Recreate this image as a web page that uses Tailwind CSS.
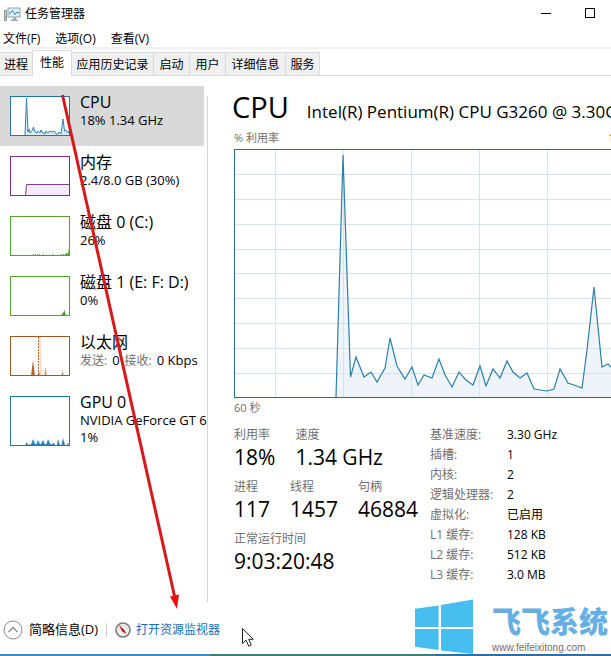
<!DOCTYPE html>
<html lang="zh-CN">
<head>
    <meta charset="UTF-8">
    <meta name="viewport" content="width=device-width, initial-scale=1.0">
    <title>任务管理器</title>
    <script src="https://cdn.jsdelivr.net/npm/@tailwindcss/browser@4"></script>
</head>

<body class="relative flex min-h-screen flex-col overflow-x-hidden bg-white font-['Open_Sans','Noto_Sans_CJK_SC',sans-serif] text-xs text-black">

<!-- Title bar -->
<header class="flex h-7 items-center justify-between pl-1">
    <div class="flex items-center gap-1">
        <svg class="h-4 w-[17px]" viewBox="0 0 17 16">
            <rect x="0.5" y="4.500" width="2" height="10" fill="#c9d2d0" stroke="#8b9a98"/>
            <path d="M1 11h1.500" stroke="#5a9a5a"/>
            <rect x="4" y="2" width="12" height="9" fill="#d9f1f8" stroke="#8fa3ab"/>
            <path d="M5 7h1.500l2-2.500 2.500 4 1.500-2h2.500" fill="none" stroke="#2f83b5"/>
            <path d="M9 11.500h3v2h2V15H7v-1.500h2z" fill="#9aa8ac"/>
        </svg>
        <h1 class="text-xs">任务管理器</h1>
    </div>
    <div class="flex">
        <button class="flex h-7 w-[45px] items-center justify-center" aria-label="最小化">
            <svg class="h-3 w-3" viewBox="0 0 12 12"><path d="M1 5.500h10" stroke="#000"/></svg>
        </button>
        <button class="flex h-7 w-[43px] items-center justify-center pb-[2px]" aria-label="最大化">
            <svg class="h-3 w-3" viewBox="0 0 12 12"><rect x="1.500" y="1.500" width="9" height="9" fill="none" stroke="#000"/></svg>
        </button>
    </div>
</header>

<!-- Menu -->
<nav class="flex h-[21px] items-center gap-[15px] border-b-2 border-[#f0f0f0] pt-[3px] pl-[3px]">
    <button>文件(F)</button>
    <button>选项(O)</button>
    <button>查看(V)</button>
</nav>

<!-- Tabs -->
<div class="flex h-[27px] items-end border-b border-[#d9d9d9] whitespace-nowrap" role="tablist">
    <button role="tab" class="h-[23px] w-8 border-t border-[#d9d9d9] bg-[#f0f0f0] pt-[2px] pl-1 text-left">进程</button>
    <button role="tab" aria-selected="true" class="-mb-px h-[26px] w-10 border border-b-0 border-[#d9d9d9] bg-white pb-[2px]">性能</button>
    <button role="tab" class="h-[23px] w-[82px] border-t border-r border-[#d9d9d9] bg-[#f0f0f0] pt-[2px]">应用历史记录</button>
    <button role="tab" class="h-[23px] w-9 border-t border-r border-[#d9d9d9] bg-[#f0f0f0] pt-[2px]">启动</button>
    <button role="tab" class="h-[23px] w-9 border-t border-r border-[#d9d9d9] bg-[#f0f0f0] pt-[2px]">用户</button>
    <button role="tab" class="h-[23px] w-[60px] border-t border-r border-[#d9d9d9] bg-[#f0f0f0] pt-[2px]">详细信息</button>
    <button role="tab" class="h-[23px] w-[34px] border-t border-r border-[#d9d9d9] bg-[#f0f0f0] pt-[2px]">服务</button>
</div>

<main class="flex flex-1">
    <!-- Resource list -->
    <aside class="w-[207px] shrink-0 pt-[10px] whitespace-nowrap">
        <button class="flex h-[60px] w-[204px] items-start gap-[10px] bg-[#d9d9d9] pt-[6px] pl-[10px] text-left">
            <svg class="mt-1 h-10 w-[60px] shrink-0 bg-white" viewBox="0 0 60 40">
                <path d="M15 39L16.500 2 18 36 19 33 20 37 22 35 23.500 31 25 36 27 37 28 35 30 37 31 34 33 37 35 38 36 35 38 37 40 35 42 36 44 35 46 38 48 38 49 36 51 38 53 23 54.500 35 56 34 58 37 60 34V40H15z" fill="#dcecf6" stroke="#2f83b5"/>
                <rect x="0.5" y="0.5" width="59" height="39" fill="none" stroke="#1f78a8"/>
            </svg>
            <span>
                <span class="block text-base leading-5">CPU</span>
                <span class="block text-[13px] leading-[17px]">18% 1.34 GHz</span>
            </span>
        </button>
        <button class="flex h-[60px] w-[204px] items-start gap-[10px] pt-[6px] pl-[10px] text-left">
            <svg class="mt-1 h-10 w-[60px] shrink-0 bg-white" viewBox="0 0 60 40">
                <path d="M15.500 40L16.500 28.500H60V40z" fill="#f3ebf5" stroke="#8b35a0"/>
                <rect x="0.5" y="0.5" width="59" height="39" fill="none" stroke="#7d2c92"/>
            </svg>
            <span>
                <span class="block text-base leading-5">内存</span>
                <span class="block text-[13px] leading-[17px]">2.4/8.0 GB (30%)</span>
            </span>
        </button>
        <button class="flex h-[60px] w-[204px] items-start gap-[10px] pt-[6px] pl-[10px] text-left">
            <svg class="mt-1 h-10 w-[60px] shrink-0 bg-white" viewBox="0 0 60 40">
                <path d="M23 38.500h7M33 38.500h2M42 38.500h2M51 38.500h4" stroke="#6fb04a" stroke-dasharray="1 1"/>
                <path d="M54 40L56 37 58 38 59 32V40z" fill="#4d9a22"/>
                <rect x="0.5" y="0.5" width="59" height="39" fill="none" stroke="#57a02c"/>
            </svg>
            <span>
                <span class="block text-base leading-5">磁盘 0 (C:)</span>
                <span class="block text-[13px] leading-[17px]">26%</span>
            </span>
        </button>
        <button class="flex h-[60px] w-[204px] items-start gap-[10px] pt-[6px] pl-[10px] text-left">
            <svg class="mt-1 h-10 w-[60px] shrink-0 bg-white" viewBox="0 0 60 40">
                <path d="M50 40L52 38 53 37 54.500 34 56 40z" fill="#4d9a22"/>
                <rect x="0.5" y="0.5" width="59" height="39" fill="none" stroke="#57a02c"/>
            </svg>
            <span>
                <span class="block text-base leading-5">磁盘 1 (E: F: D:)</span>
                <span class="block text-[13px] leading-[17px]">0%</span>
            </span>
        </button>
        <button class="flex h-[60px] w-[204px] items-start gap-[10px] pt-[6px] pl-[10px] text-left">
            <svg class="mt-1 h-10 w-[60px] shrink-0 bg-white" viewBox="0 0 60 40">
                <path d="M21 40L23 24 25 40z" fill="#b5622c"/>
                <path d="M27 40L29 35 31 40zM34 40L35.500 31 37 40zM51 40L52.500 34 54 40z" fill="#d59a78"/>
                <path d="M30 1L31 39" stroke="#f5ddd0" stroke-width="2"/>
                <path d="M28.500 1V39" stroke="#c0672f" stroke-dasharray="2 1"/>
                <rect x="0.5" y="0.5" width="59" height="39" fill="none" stroke="#a5561c"/>
            </svg>
            <span>
                <span class="block text-base leading-5">以太网</span>
                <span class="flex gap-[5px] text-[13px] leading-[17px]">
                    <span class="text-xs leading-[17px] text-[#707070]">发送:</span>
                    <span>0</span>
                    <span class="text-xs leading-[17px] text-[#707070]">接收:</span>
                    <span>0 Kbps</span>
                </span>
            </span>
        </button>
        <button class="flex h-[70px] w-[204px] items-start gap-[10px] pt-[6px] pl-[10px] text-left">
            <svg class="mt-1 h-[50px] w-[60px] shrink-0 bg-white" viewBox="0 0 60 50">
                <path d="M15 50L16.500 46 18 48.500 21 48.500 23 43 25 48 26.500 48 28 44 30 48 31 48 33 44 35 48.500 36.500 48 38 43 40 47.500 42 48.500 44 46.500 45 49 47 49 48 43 50 49 51.500 49 53 42 55 49 57 49 58 46 59 50z" fill="#2f83b5"/>
                <rect x="0.5" y="0.5" width="59" height="49" fill="none" stroke="#1f78a8"/>
            </svg>
            <span>
                <span class="block text-base leading-5">GPU 0</span>
                <span class="block text-[13px] leading-[17px]">NVIDIA GeForce GT 6</span>
                <span class="block text-[13px] leading-[17px]">1%</span>
            </span>
        </button>
    </aside>
    <div class="mt-5 w-px shrink-0 bg-[#d5d5d5]"></div>

    <!-- CPU details -->
    <section class="min-w-0 flex-1 overflow-hidden pt-[11px] pl-[26px]">
        <div class="-ml-[2px] flex h-[41px] items-baseline gap-[18px] whitespace-nowrap">
            <h2 class="text-[29px] leading-10">CPU</h2>
            <p class="text-[17px]">Intel(R) Pentium(R) CPU G3260 @ 3.30GHz</p>
        </div>
        <div class="w-[calc(100%+25px)]">
            <div class="flex h-[21px] items-center justify-between text-[11px] text-[#707070]">
                <span>% 利用率</span>
                <span class="text-[#c07a3a]">100%</span>
            </div>
            <svg class="block h-[249px] w-full">
                <path d="M102 248L109 6 116.500 228 122 208 130 228 137 223 143 233 151 219 156 189 163 217 171 230 178 218 184 236 190 226 198 229 205 210 211 226 218 238 225 223 232 231 239 236 246 217 252 237 259 220 266 229 273 212 279 223 286 229 293 224 300 240 313 242 320 240 326 220 334 234 340 236 348 239 353 201 360 138 368 218 374 215 380 221 402 224V248z" fill="#eef4fa"/>
                <path d="M41.500 0V248M109.500 0V248M177.500 0V248M245.500 0V248M313.500 0V248M381.500 0V248" stroke="#d3e4ec"/>
                <path d="M0 25.500H2000M0 50.500H2000M0 75.500H2000M0 100.500H2000M0 124.500H2000M0 149.500H2000M0 174.500H2000M0 199.500H2000M0 224.500H2000" stroke="#d3e4ec"/>
                <path d="M102 248L109 6 116.500 228 122 208 130 228 137 223 143 233 151 219 156 189 163 217 171 230 178 218 184 236 190 226 198 229 205 210 211 226 218 238 225 223 232 231 239 236 246 217 252 237 259 220 266 229 273 212 279 223 286 229 293 224 300 240 313 242 320 240 326 220 334 234 340 236 348 239 353 201 360 138 368 218 374 215 380 221 402 224" fill="none" stroke="#2a7fae" stroke-width="1.200"/>
                <rect x="0.5" y="0.5" width="100%" height="248" fill="none" stroke="#1f6f94"/>
            </svg>
            <p class="h-[20px] text-[11px] leading-5 text-[#707070]">60 秒</p>
        </div>

        <div class="flex pt-[7px] whitespace-nowrap">
            <div class="flex w-[196px] shrink-0 flex-col gap-2">
                <dl class="flex gap-5">
                    <div><dt class="leading-5 text-[#707070]">利用率</dt><dd class="text-[21px] leading-6">18%</dd></div>
                    <div><dt class="leading-5 text-[#707070]">速度</dt><dd class="text-[21px] leading-6">1.34 GHz</dd></div>
                </dl>
                <dl class="flex gap-5">
                    <div><dt class="leading-5 text-[#707070]">进程</dt><dd class="text-[21px] leading-6">117</dd></div>
                    <div><dt class="leading-5 text-[#707070]">线程</dt><dd class="text-[21px] leading-6">1457</dd></div>
                    <div><dt class="leading-5 text-[#707070]">句柄</dt><dd class="text-[21px] leading-6">46884</dd></div>
                </dl>
                <dl>
                    <dt class="leading-5 text-[#707070]">正常运行时间</dt><dd class="text-[21px] leading-6">9:03:20:48</dd>
                </dl>
            </div>
            <table class="self-start text-left leading-5">
                <tr><th class="w-[77px] p-0 font-normal text-[#707070]">基准速度:</th><td class="p-0">3.30 GHz</td></tr>
                <tr><th class="p-0 font-normal text-[#707070]">插槽:</th><td class="p-0">1</td></tr>
                <tr><th class="p-0 font-normal text-[#707070]">内核:</th><td class="p-0">2</td></tr>
                <tr><th class="p-0 font-normal text-[#707070]">逻辑处理器:</th><td class="p-0">2</td></tr>
                <tr><th class="p-0 font-normal text-[#707070]">虚拟化:</th><td class="p-0">已启用</td></tr>
                <tr><th class="p-0 font-normal text-[#707070]">L1 缓存:</th><td class="p-0">128 KB</td></tr>
                <tr><th class="p-0 font-normal text-[#707070]">L2 缓存:</th><td class="p-0">512 KB</td></tr>
                <tr><th class="p-0 font-normal text-[#707070]">L3 缓存:</th><td class="p-0">3.0 MB</td></tr>
            </table>
        </div>
    </section>
</main>

<!-- Footer -->
<footer class="flex h-[52px] shrink-0 items-center pt-[3px] pl-[3px] whitespace-nowrap">
    <button class="flex items-center gap-[6px] text-[13px]">
        <svg class="h-5 w-5" viewBox="0 0 20 20" fill="none">
            <circle cx="10" cy="10" r="9" stroke="#8a8a8a"/>
            <path d="M5.500 12L10 7.500 14.500 12" stroke="#8a8a8a" stroke-width="1.300"/>
        </svg>
        简略信息(D)
    </button>
    <span class="mr-2 ml-2 h-[14px] w-px bg-[#d0d0d0]"></span>
    <a href="#" class="flex items-center gap-[5px] text-[#1a6db5]">
        <svg class="h-4 w-4" viewBox="0 0 16 16">
            <circle cx="8" cy="8" r="7" fill="#f4f0ee" stroke="#77797c" stroke-width="1.600"/>
            <path d="M3.500 8a4.500 4.500 0 0 1 9 0" fill="none" stroke="#b5b5b5" stroke-dasharray="1 1"/>
            <path d="M4 3L9.500 8 11.500 12 7 9.500z" fill="#b02a25"/>
        </svg>
        打开资源监视器
    </a>
</footer>
<div class="flex h-[2px] shrink-0">
    <div class="w-[210px] bg-[#3f8fc4]"></div>
    <div class="w-[226px] bg-[#3d7f78]"></div>
    <div class="flex-1 bg-[#2f6da5]"></div>
</div>

<!-- Annotation arrow -->
<svg class="pointer-events-none absolute top-[90px] left-[50px] h-[520px] w-[140px]" viewBox="50 90 140 520">
    <path d="M62.500 95L174.500 596" stroke="#d8191b" stroke-width="3"/>
    <path d="M177 609L170 596.500 179 594.500z" fill="#ee1111"/>
</svg>

<!-- Mouse pointer -->
<svg class="pointer-events-none absolute top-[627px] left-[241px] h-[21px] w-[14px]" viewBox="0 0 14 21">
    <path d="M1.500 1.500V16.500L5 13.200 7.700 19.200 10.300 18 7.700 12.300H12.200z" fill="#fff" stroke="#222"/>
</svg>

<!-- Watermark -->
<div class="pointer-events-none absolute right-0 bottom-0 flex items-start gap-[18px] whitespace-nowrap">
    <svg class="h-[57px] w-[59px]" viewBox="0 0 60 57" fill="#47bdf0">
        <path d="M0 9.500L24 6V28H0zM26.500 5.500L59 0V28H26.500zM0 30H24V51.500L0 48zM26.500 30H59V55.500L26.500 52z"/>
    </svg>
    <div class="h-[57px] w-[119px] pt-2">
        <p class="text-[29px] leading-[30px] font-black text-[#66afe5]">飞飞系统</p>
        <p class="pt-[3px] font-['Liberation_Sans',sans-serif] text-[10px] leading-4 text-[#6f6f6f]">www.feifeixitong.com</p>
    </div>
</div>
</body>
</html>
